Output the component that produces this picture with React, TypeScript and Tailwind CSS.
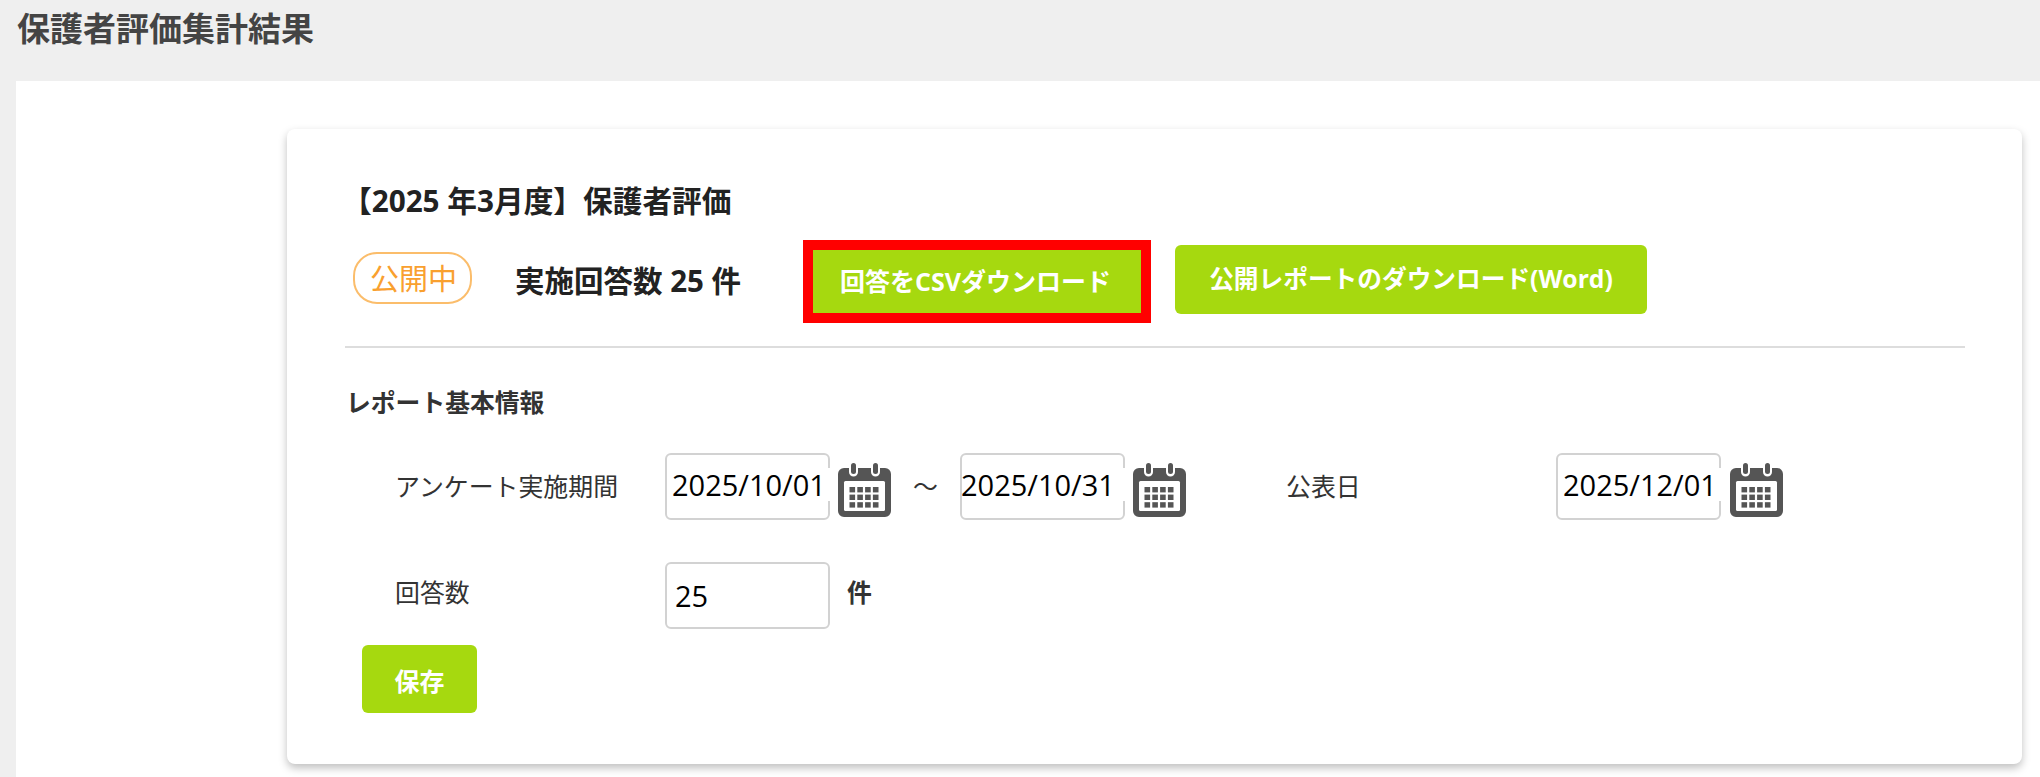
const font = { fontFamily: '"Open Sans","Noto Sans CJK JP",sans-serif' };

function CalendarIcon({ className = "" }: { className?: string }) {
  const cells: React.ReactElement[] = [];
  for (let r = 0; r < 3; r++) {
    for (let c = 0; c < 4; c++) {
      cells.push(<rect key={`${r}-${c}`} x={11.5 + c * 7.8} y={24 + r * 7.6} width={5.6} height={5.4} fill="#555" />);
    }
  }
  return (
    <svg viewBox="0 0 53 54" className={`w-[53px] h-[54px] shrink-0 ${className}`}>
      <path d="M6 5h5v4a4.5 4.5 0 0 0 9 0V5h13v4a4.5 4.5 0 0 0 9 0V5h5a6 6 0 0 1 6 6v37a6 6 0 0 1-6 6H6a6 6 0 0 1-6-6V11a6 6 0 0 1 6-6z" fill="#555" />
      <rect x="13" y="0" width="5" height="11" rx="2.5" fill="#555" />
      <rect x="35" y="0" width="5" height="11" rx="2.5" fill="#555" />
      <rect x="6" y="18" width="41" height="30" rx="1.5" fill="#fff" />
      {cells}
    </svg>
  );
}

function DateField({ value, flush = false }: { value: string; flush?: boolean }) {
  return (
    <div className="relative w-[165px] h-[67px] shrink-0">
      <input
        readOnly
        value={value}
        style={font}
        className={`w-full h-full border-2 border-[#d2d2d2] rounded-[6px] bg-white pr-0 pb-[5px] text-[29px] text-black outline-none ${flush ? "pl-0 -indent-px" : "pl-[5px]"}`}
      />
      <span className="absolute right-0 top-[15px] w-[2px] h-[33px] bg-white" />
    </div>
  );
}

function Button({ children, className = "" }: { children: React.ReactNode; className?: string }) {
  return (
    <button className={`bg-[#a6d90f] text-white font-bold flex items-center justify-center ${className}`}>
      {children}
    </button>
  );
}

export default function App() {
  return (
    <div style={font} className="w-[2040px] h-[777px] overflow-hidden bg-[#efefef] text-[#333]">
      <header className="h-[81px] pl-[17px] pt-[9px]">
        <h1 className="text-[33px] leading-[40px] font-bold text-[#444]">保護者評価集計結果</h1>
      </header>
      <main className="ml-[16px] h-[696px] bg-white pt-[48px] pl-[271px] pr-[18px]">
        <section className="h-[635px] bg-white rounded-[8px] shadow-[0_4px_8px_rgba(0,0,0,0.25)] pl-[58px] pr-[57px] pt-[52px]">
          <h2 className="text-[29.7px] leading-[40px] font-bold text-[#222] -ml-[3px]">【2025 年3月度】保護者評価</h2>

          <div className="flex items-center mt-[19px] h-[83px] relative">
            <span className="ml-[8px] -mt-[7px] w-[119px] h-[52px] rounded-[24px] border-2 border-[#fbbd6b] text-[#f9a02f] text-[29px] pl-[2px] pt-[1px] flex items-center justify-center shrink-0">
              公開中
            </span>
            <span className="ml-[43px] w-[288px] text-[29.5px] font-bold text-[#222] shrink-0">実施回答数 25 件</span>
            <div className="border-[10px] border-[#ff0000] shrink-0">
              <Button className="w-[328px] h-[63px] text-[25px] pr-[3px]">回答をCSVダウンロード</Button>
            </div>
            <Button className="ml-[24px] w-[472px] h-[69px] rounded-[6px] -mt-[5px] text-[24.7px]">公開レポートのダウンロード(Word)</Button>
          </div>

          <hr className="mt-[23px] border-0 border-t-2 border-[#dddddd]" />

          <h3 className="ml-[1px] mt-[34px] text-[24.8px] leading-[40px] font-bold text-[#333]">レポート基本情報</h3>

          <div className="flex items-center mt-[31px] h-[67px] text-[24.9px] text-[#333]">
            <span className="ml-[50px] w-[270px] shrink-0">アンケート実施期間</span>
            <DateField value="2025/10/01" />
            <CalendarIcon className="ml-[8px] mt-[7px]" />
            <span className="w-[69px] text-center shrink-0">～</span>
            <DateField value="2025/10/31" flush />
            <CalendarIcon className="ml-[8px] mt-[7px]" />
            <span className="ml-[100px] w-[270px] shrink-0">公表日</span>
            <DateField value="2025/12/01" />
            <CalendarIcon className="ml-[9px] mt-[7px]" />
          </div>

          <div className="flex items-center mt-[42px] h-[67px] text-[24.9px] text-[#333]">
            <span className="ml-[50px] w-[270px] shrink-0 -mt-[6px]">回答数</span>
            <input
              readOnly
              value="25"
              style={font}
              className="w-[165px] h-[67px] border-2 border-[#d2d2d2] rounded-[6px] bg-white pl-[8px] pb-[1px] text-[29px] text-black outline-none shrink-0"
            />
            <span className="ml-[17px] font-bold -mt-[6px]">件</span>
          </div>

          <Button className="ml-[17px] mt-[16px] w-[115px] h-[68px] rounded-[6px] pt-[5px] text-[25px]">保存</Button>
        </section>
      </main>
    </div>
  );
}
